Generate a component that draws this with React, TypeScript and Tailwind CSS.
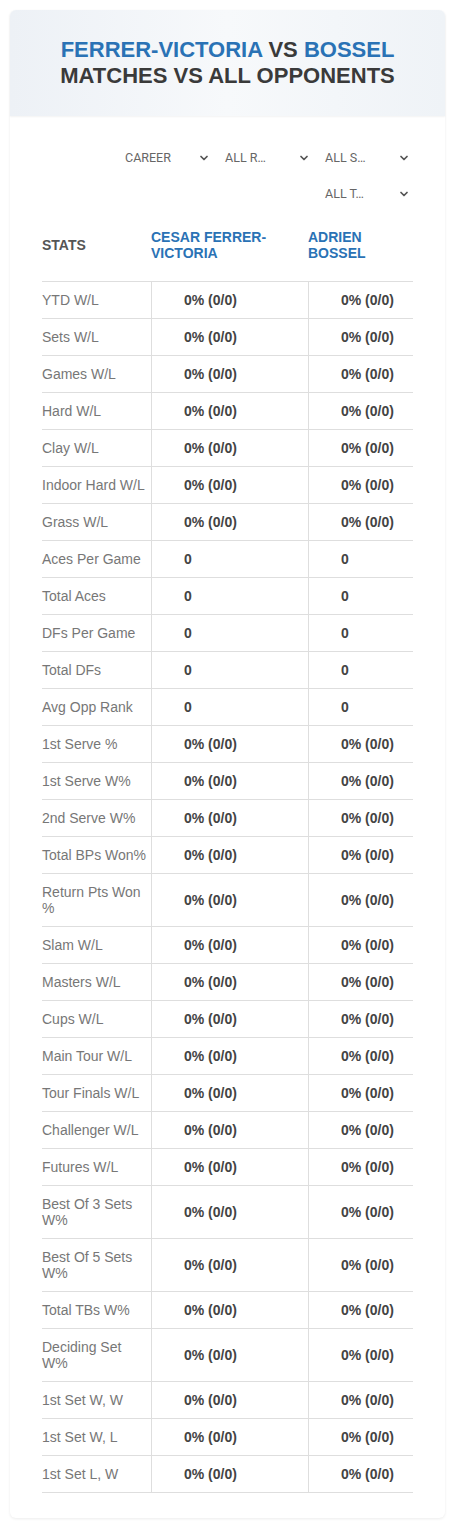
import { ChevronDown } from "lucide-react";

type Row = { label: string; value: string };

const pct = "0% (0/0)";

const rows: Row[] = [
  { label: "YTD W/L", value: pct },
  { label: "Sets W/L", value: pct },
  { label: "Games W/L", value: pct },
  { label: "Hard W/L", value: pct },
  { label: "Clay W/L", value: pct },
  { label: "Indoor Hard W/L", value: pct },
  { label: "Grass W/L", value: pct },
  { label: "Aces Per Game", value: "0" },
  { label: "Total Aces", value: "0" },
  { label: "DFs Per Game", value: "0" },
  { label: "Total DFs", value: "0" },
  { label: "Avg Opp Rank", value: "0" },
  { label: "1st Serve %", value: pct },
  { label: "1st Serve W%", value: pct },
  { label: "2nd Serve W%", value: pct },
  { label: "Total BPs Won%", value: pct },
  { label: "Return Pts Won %", value: pct },
  { label: "Slam W/L", value: pct },
  { label: "Masters W/L", value: pct },
  { label: "Cups W/L", value: pct },
  { label: "Main Tour W/L", value: pct },
  { label: "Tour Finals W/L", value: pct },
  { label: "Challenger W/L", value: pct },
  { label: "Futures W/L", value: pct },
  { label: "Best Of 3 Sets W%", value: pct },
  { label: "Best Of 5 Sets W%", value: pct },
  { label: "Total TBs W%", value: pct },
  { label: "Deciding Set W%", value: pct },
  { label: "1st Set W, W", value: pct },
  { label: "1st Set W, L", value: pct },
  { label: "1st Set L, W", value: pct },
];

const filters = ["CAREER", "ALL R…", "ALL S…", "ALL T…"];

function Filter({ label }: { label: string }) {
  return (
    <div className="flex h-[28px] w-[95px] items-center justify-between pl-[7px] pr-[3px] font-['Roboto',sans-serif] text-[12.5px] text-[#666]">
      <span>{label}</span>
      <ChevronDown size={12} strokeWidth={3.5} className="text-[#555]" />
    </div>
  );
}

export default function App() {
  return (
    <div className="min-h-[1528px] bg-white pt-[10px] font-['Liberation_Sans',Arial,sans-serif]">
      <div className="mx-[10px] rounded-md bg-white pb-[25px] shadow-[0_1px_3px_rgba(0,0,0,0.08)]">
        <div className="rounded-t-md bg-gradient-to-r from-[#edf1f6] via-[#f7f9fb] to-[#eff3f7] py-[27px] text-center text-[22px] font-bold uppercase leading-[26px] text-[#3a3a3a] shadow-[0_1px_2px_rgba(0,0,0,0.05)]">
          <div>
            <span className="text-[#2a72b5]">Ferrer-Victoria</span> vs{" "}
            <span className="text-[#2a72b5]">Bossel</span>
          </div>
          <div>Matches vs All Opponents</div>
        </div>

        <div className="px-8">
          <div className="mt-[28px] flex flex-wrap justify-end gap-x-[5px] gap-y-[8px]">
            {filters.map((f) => (
              <Filter key={f} label={f} />
            ))}
          </div>

          <div className="mt-[16px] text-[14px] leading-[16px]">
            <div className="grid grid-cols-[109px_157px_1fr] items-center pb-[20px] pt-[5px] font-bold uppercase">
              <div className="text-[#555]">Stats</div>
              <div className="pr-4 text-[#2a72b5]">Cesar Ferrer-Victoria</div>
              <div className="pr-4 text-[#2a72b5]">Adrien Bossel</div>
            </div>
            {rows.map((r) => (
              <div
                key={r.label}
                className="grid grid-cols-[109px_157px_1fr] border-t border-[#dedede] last:border-b"
              >
                <div className="flex items-center py-[10px] pr-[4px] text-[#777]">{r.label}</div>
                <div className="flex items-center border-l border-[#dedede] pl-[32px] font-bold text-[#444]">
                  {r.value}
                </div>
                <div className="flex items-center border-l border-[#dedede] pl-[32px] font-bold text-[#444]">
                  {r.value}
                </div>
              </div>
            ))}
          </div>
        </div>
      </div>
    </div>
  );
}
